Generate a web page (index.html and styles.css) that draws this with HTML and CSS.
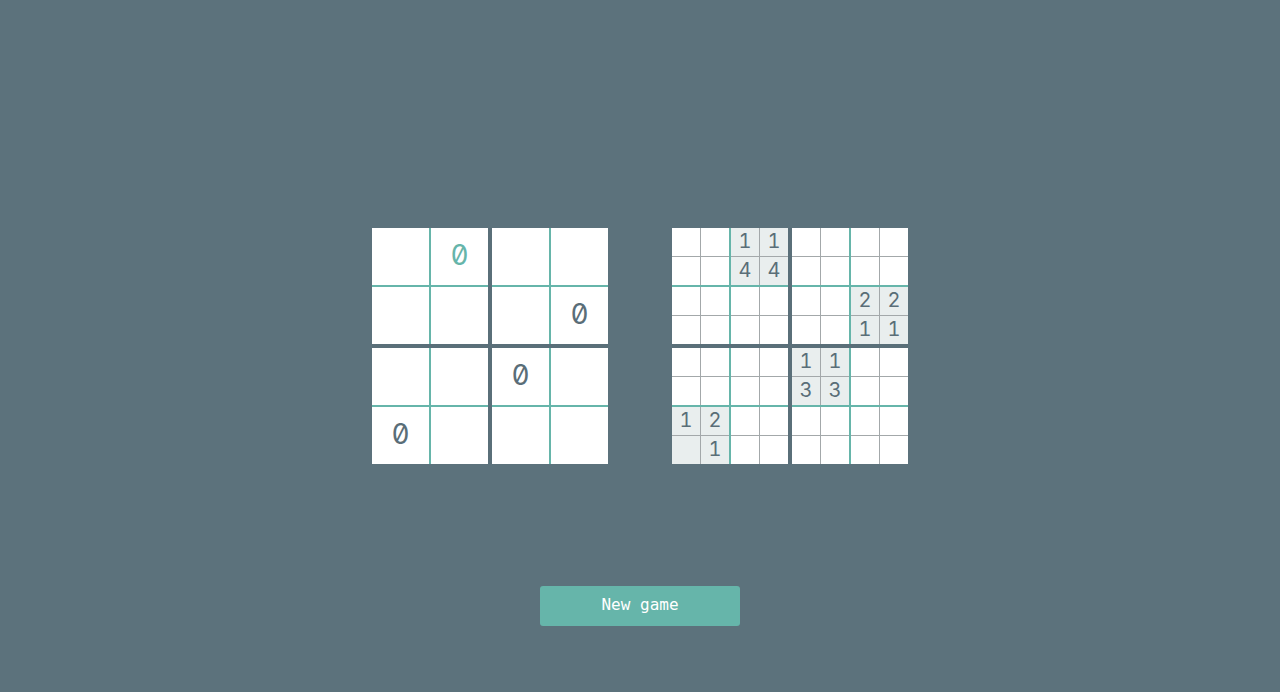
FILE: index.html
```html
<!DOCTYPE html>
<html>
<head>
<meta charset="utf-8">
<title>Game</title>
<link rel="stylesheet" href="styles.css">
</head>
<body>
<main class="page">
  <section class="boards">
    <div class="board board-big">
      <div class="quad">
        <div class="cell"></div>
        <div class="cell accent">0</div>
        <div class="cell"></div>
        <div class="cell"></div>
      </div>
      <div class="quad">
        <div class="cell"></div>
        <div class="cell"></div>
        <div class="cell"></div>
        <div class="cell">0</div>
      </div>
      <div class="quad">
        <div class="cell"></div>
        <div class="cell"></div>
        <div class="cell">0</div>
        <div class="cell"></div>
      </div>
      <div class="quad">
        <div class="cell">0</div>
        <div class="cell"></div>
        <div class="cell"></div>
        <div class="cell"></div>
      </div>
    </div>

    <div class="board board-small">
      <div class="quad">
        <div class="block">
          <div class="mini"></div><div class="mini"></div><div class="mini"></div><div class="mini"></div>
        </div>
        <div class="block hl">
          <div class="mini">1</div><div class="mini">1</div><div class="mini">4</div><div class="mini">4</div>
        </div>
        <div class="block">
          <div class="mini"></div><div class="mini"></div><div class="mini"></div><div class="mini"></div>
        </div>
        <div class="block">
          <div class="mini"></div><div class="mini"></div><div class="mini"></div><div class="mini"></div>
        </div>
      </div>
      <div class="quad">
        <div class="block">
          <div class="mini"></div><div class="mini"></div><div class="mini"></div><div class="mini"></div>
        </div>
        <div class="block">
          <div class="mini"></div><div class="mini"></div><div class="mini"></div><div class="mini"></div>
        </div>
        <div class="block">
          <div class="mini"></div><div class="mini"></div><div class="mini"></div><div class="mini"></div>
        </div>
        <div class="block hl">
          <div class="mini">2</div><div class="mini">2</div><div class="mini">1</div><div class="mini">1</div>
        </div>
      </div>
      <div class="quad">
        <div class="block">
          <div class="mini"></div><div class="mini"></div><div class="mini"></div><div class="mini"></div>
        </div>
        <div class="block">
          <div class="mini"></div><div class="mini"></div><div class="mini"></div><div class="mini"></div>
        </div>
        <div class="block hl">
          <div class="mini">1</div><div class="mini">2</div><div class="mini"></div><div class="mini">1</div>
        </div>
        <div class="block">
          <div class="mini"></div><div class="mini"></div><div class="mini"></div><div class="mini"></div>
        </div>
      </div>
      <div class="quad">
        <div class="block hl">
          <div class="mini">1</div><div class="mini">1</div><div class="mini">3</div><div class="mini">3</div>
        </div>
        <div class="block">
          <div class="mini"></div><div class="mini"></div><div class="mini"></div><div class="mini"></div>
        </div>
        <div class="block">
          <div class="mini"></div><div class="mini"></div><div class="mini"></div><div class="mini"></div>
        </div>
        <div class="block">
          <div class="mini"></div><div class="mini"></div><div class="mini"></div><div class="mini"></div>
        </div>
      </div>
    </div>
  </section>

  <button class="new-game" type="button">New game</button>
</main>
</body>
</html>
```

FILE: styles.css
```css
html, body {
  margin: 0;
  padding: 0;
}

body {
  background: #5c727c;
  height: 692px;
  overflow: hidden;
  font-family: "DejaVu Sans Mono", "Liberation Mono", monospace;
}

.page {
  display: flex;
  flex-direction: column;
  align-items: center;
  padding-top: 228px;
}

.boards {
  display: flex;
  gap: 64px;
}

.board {
  display: grid;
  grid-template-columns: repeat(2, auto);
  gap: 4px;
  background: #5a6f79;
}

.quad {
  display: grid;
  grid-template-columns: repeat(2, auto);
  gap: 2px;
  background: #66b5aa;
}

.cell {
  width: 57px;
  height: 57px;
  background: #ffffff;
  color: #5a6e78;
  font-family: Inter, "DejaVu Sans", sans-serif;
  font-feature-settings: "zero" 1, "tnum" 1;
  font-weight: 400;
  font-size: 28px;
  line-height: 1;
  padding-bottom: 3px;
  box-sizing: border-box;
  display: flex;
  align-items: center;
  justify-content: center;
}

.cell.accent {
  color: #66b5aa;
}

.block {
  display: grid;
  grid-template-columns: repeat(2, 28px);
  grid-template-rows: repeat(2, 28px);
  gap: 1px;
  background: #a3a8aa;
}

.mini {
  background: #ffffff;
  color: #5a6e78;
  font-family: Inter, "DejaVu Sans", sans-serif;
  font-feature-settings: "tnum" 1;
  font-size: 20px;
  line-height: 1;
  padding-bottom: 2px;
  box-sizing: border-box;
  display: flex;
  align-items: center;
  justify-content: center;
}

.block.hl .mini {
  background: #e9eeee;
}

.new-game {
  margin-top: 122px;
  width: 200px;
  height: 40px;
  border: none;
  border-radius: 3px;
  background: #66b5aa;
  color: #ffffff;
  font-family: "DejaVu Sans Mono", "Liberation Mono", monospace;
  font-size: 16px;
  padding: 0 0 3px;
}
```
